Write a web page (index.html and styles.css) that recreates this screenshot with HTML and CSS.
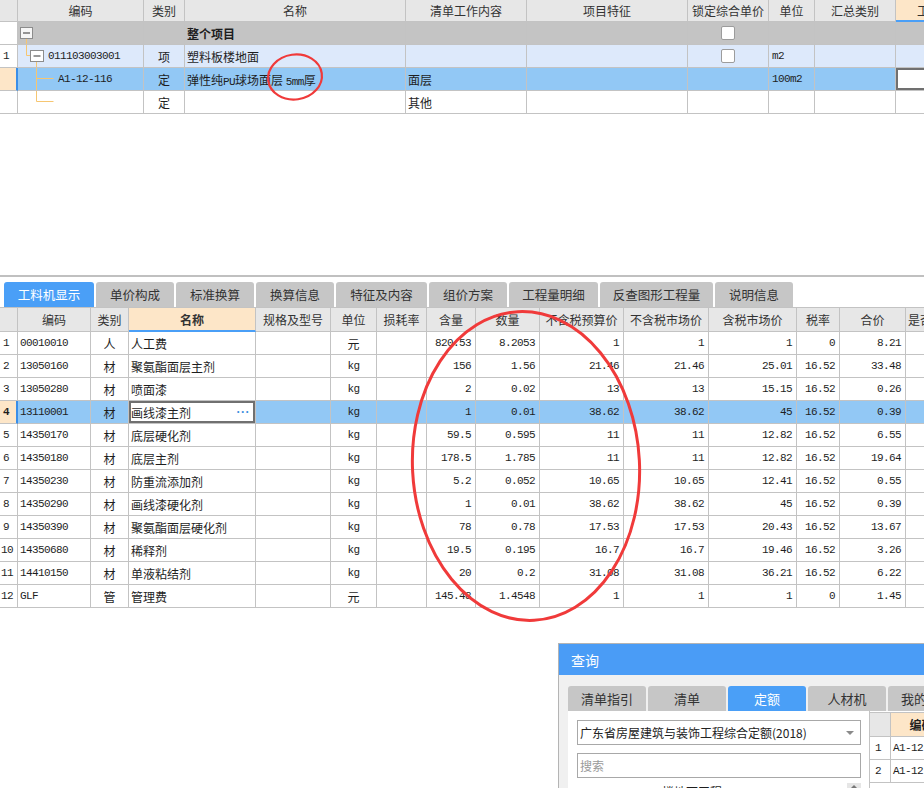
FILE: index.html
```html
<!DOCTYPE html>
<html lang="zh-CN">
<head>
<meta charset="utf-8">
<title>工料机显示</title>
<link rel="stylesheet" href="styles.css">
</head>
<body>
<div class="sheet">
  <!-- top table -->
  <div class="grid-wrap">
    <div class="row hd top-cols">
      <div class="c"></div><div class="c">编码</div><div class="c">类别</div><div class="c">名称</div><div class="c">清单工作内容</div><div class="c">项目特征</div><div class="c">锁定综合单价</div><div class="c">单位</div><div class="c">汇总类别</div><div class="c sorted left-hd">工程量表达式</div>
    </div>
    <div class="row top-cols r-gray">
      <div class="c rn white"></div>
      <div class="c tree"><svg width="30" height="22" viewBox="0 0 30 22"><line x1="8.5" y1="16.5" x2="8.5" y2="22" stroke="#f6c672"/><rect x="2.5" y="5.5" width="12" height="11" fill="#f6f6f6" stroke="#8c8c8c"/><line x1="5" y1="11" x2="12" y2="11" stroke="#333"/></svg></div>
      <div class="c"></div><div class="c bold">整个项目</div><div class="c"></div><div class="c"></div><div class="c ctr"><span class="chk"></span></div><div class="c"></div><div class="c"></div><div class="c"></div>
    </div>
    <div class="row top-cols r-light">
      <div class="c rn white mono">1</div>
      <div class="c tree"><svg width="30" height="22" viewBox="0 0 30 22"><polyline points="8.5,0 8.5,10.5 12.5,10.5" fill="none" stroke="#f6c672"/><line x1="18.5" y1="16.5" x2="18.5" y2="22" stroke="#f6c672"/><rect x="12.5" y="5.5" width="13" height="11" fill="#fff" stroke="#8c8c8c"/><line x1="15.5" y1="11" x2="22.5" y2="11" stroke="#333"/></svg><span class="mono">011103003001</span></div>
      <div class="c ctr">项</div><div class="c">塑料板楼地面</div><div class="c"></div><div class="c"></div><div class="c ctr"><span class="chk"></span></div><div class="c mono pl3">m2</div><div class="c"></div><div class="c"></div>
    </div>
    <div class="row top-cols r-sel">
      <div class="c rn cur"></div>
      <div class="c tree"><svg width="40" height="22" viewBox="0 0 40 22"><polyline points="18.5,0 18.5,22" fill="none" stroke="#f6c672"/><line x1="18.5" y1="10.5" x2="35.5" y2="10.5" stroke="#f6c672"/></svg><span class="mono">A1-12-116</span></div>
      <div class="c ctr">定</div><div class="c"><span class="mixed">弹性纯<span class="mono">PU</span>球场面层 <span class="mono">5mm</span>厚</span></div><div class="c">面层</div><div class="c"></div><div class="c"></div><div class="c mono pl3">100m2</div><div class="c"></div><div class="c edit"></div>
    </div>
    <div class="row top-cols">
      <div class="c rn"></div>
      <div class="c tree"><svg width="40" height="22" viewBox="0 0 40 22"><polyline points="18.5,0 18.5,10.5 35.5,10.5" fill="none" stroke="#f6c672"/></svg></div>
      <div class="c ctr">定</div><div class="c"></div><div class="c">其他</div><div class="c"></div><div class="c"></div><div class="c"></div><div class="c"></div><div class="c"></div>
    </div>
  </div>

  <div class="blank"></div>
  <div class="splitter"></div>

  <!-- tabs -->
  <div class="tabs">
    <div class="tab active w90">工料机显示</div>
    <div class="tab w78">单价构成</div>
    <div class="tab w78">标准换算</div>
    <div class="tab w78">换算信息</div>
    <div class="tab w91">特征及内容</div>
    <div class="tab w78">组价方案</div>
    <div class="tab w89">工程量明细</div>
    <div class="tab w113">反查图形工程量</div>
    <div class="tab w78">说明信息</div>
  </div>

  <!-- bottom table -->
  <div class="grid-wrap">
    <div class="row bhd bot-cols">
      <div class="c"></div><div class="c">编码</div><div class="c">类别</div><div class="c sorted bold">名称</div><div class="c">规格及型号</div><div class="c">单位</div><div class="c">损耗率</div><div class="c">含量</div><div class="c">数量</div><div class="c">不含税预算价</div><div class="c">不含税市场价</div><div class="c">含税市场价</div><div class="c">税率</div><div class="c">合价</div><div class="c left-hd2">是否暂估</div>
    </div>
    <div class="row bot-cols"><div class="c rn mono">1</div><div class="c mono">00010010</div><div class="c ctr">人</div><div class="c">人工费</div><div class="c"></div><div class="c ctr">元</div><div class="c"></div><div class="c r mono">820.53</div><div class="c r mono">8.2053</div><div class="c r mono">1</div><div class="c r mono">1</div><div class="c r mono">1</div><div class="c r mono">0</div><div class="c r mono">8.21</div><div class="c"></div></div>
    <div class="row bot-cols"><div class="c rn mono">2</div><div class="c mono">13050160</div><div class="c ctr">材</div><div class="c">聚氨酯面层主剂</div><div class="c"></div><div class="c ctr mono">kg</div><div class="c"></div><div class="c r mono">156</div><div class="c r mono">1.56</div><div class="c r mono">21.46</div><div class="c r mono">21.46</div><div class="c r mono">25.01</div><div class="c r mono">16.52</div><div class="c r mono">33.48</div><div class="c"></div></div>
    <div class="row bot-cols"><div class="c rn mono">3</div><div class="c mono">13050280</div><div class="c ctr">材</div><div class="c">喷面漆</div><div class="c"></div><div class="c ctr mono">kg</div><div class="c"></div><div class="c r mono">2</div><div class="c r mono">0.02</div><div class="c r mono">13</div><div class="c r mono">13</div><div class="c r mono">15.15</div><div class="c r mono">16.52</div><div class="c r mono">0.26</div><div class="c"></div></div>
    <div class="row bot-cols r-sel"><div class="c rn cur mono bold">4</div><div class="c mono">13110001</div><div class="c ctr">材</div><div class="c edit name-edit"><span>画线漆主剂</span><span class="dots">···</span></div><div class="c"></div><div class="c ctr mono">kg</div><div class="c"></div><div class="c r mono">1</div><div class="c r mono">0.01</div><div class="c r mono">38.62</div><div class="c r mono">38.62</div><div class="c r mono">45</div><div class="c r mono">16.52</div><div class="c r mono">0.39</div><div class="c"></div></div>
    <div class="row bot-cols"><div class="c rn mono">5</div><div class="c mono">14350170</div><div class="c ctr">材</div><div class="c">底层硬化剂</div><div class="c"></div><div class="c ctr mono">kg</div><div class="c"></div><div class="c r mono">59.5</div><div class="c r mono">0.595</div><div class="c r mono">11</div><div class="c r mono">11</div><div class="c r mono">12.82</div><div class="c r mono">16.52</div><div class="c r mono">6.55</div><div class="c"></div></div>
    <div class="row bot-cols"><div class="c rn mono">6</div><div class="c mono">14350180</div><div class="c ctr">材</div><div class="c">底层主剂</div><div class="c"></div><div class="c ctr mono">kg</div><div class="c"></div><div class="c r mono">178.5</div><div class="c r mono">1.785</div><div class="c r mono">11</div><div class="c r mono">11</div><div class="c r mono">12.82</div><div class="c r mono">16.52</div><div class="c r mono">19.64</div><div class="c"></div></div>
    <div class="row bot-cols"><div class="c rn mono">7</div><div class="c mono">14350230</div><div class="c ctr">材</div><div class="c">防重流添加剂</div><div class="c"></div><div class="c ctr mono">kg</div><div class="c"></div><div class="c r mono">5.2</div><div class="c r mono">0.052</div><div class="c r mono">10.65</div><div class="c r mono">10.65</div><div class="c r mono">12.41</div><div class="c r mono">16.52</div><div class="c r mono">0.55</div><div class="c"></div></div>
    <div class="row bot-cols"><div class="c rn mono">8</div><div class="c mono">14350290</div><div class="c ctr">材</div><div class="c">画线漆硬化剂</div><div class="c"></div><div class="c ctr mono">kg</div><div class="c"></div><div class="c r mono">1</div><div class="c r mono">0.01</div><div class="c r mono">38.62</div><div class="c r mono">38.62</div><div class="c r mono">45</div><div class="c r mono">16.52</div><div class="c r mono">0.39</div><div class="c"></div></div>
    <div class="row bot-cols"><div class="c rn mono">9</div><div class="c mono">14350390</div><div class="c ctr">材</div><div class="c">聚氨酯面层硬化剂</div><div class="c"></div><div class="c ctr mono">kg</div><div class="c"></div><div class="c r mono">78</div><div class="c r mono">0.78</div><div class="c r mono">17.53</div><div class="c r mono">17.53</div><div class="c r mono">20.43</div><div class="c r mono">16.52</div><div class="c r mono">13.67</div><div class="c"></div></div>
    <div class="row bot-cols"><div class="c rn rn2 mono">10</div><div class="c mono">14350680</div><div class="c ctr">材</div><div class="c">稀释剂</div><div class="c"></div><div class="c ctr mono">kg</div><div class="c"></div><div class="c r mono">19.5</div><div class="c r mono">0.195</div><div class="c r mono">16.7</div><div class="c r mono">16.7</div><div class="c r mono">19.46</div><div class="c r mono">16.52</div><div class="c r mono">3.26</div><div class="c"></div></div>
    <div class="row bot-cols"><div class="c rn rn2 mono">11</div><div class="c mono">14410150</div><div class="c ctr">材</div><div class="c">单液粘结剂</div><div class="c"></div><div class="c ctr mono">kg</div><div class="c"></div><div class="c r mono">20</div><div class="c r mono">0.2</div><div class="c r mono">31.08</div><div class="c r mono">31.08</div><div class="c r mono">36.21</div><div class="c r mono">16.52</div><div class="c r mono">6.22</div><div class="c"></div></div>
    <div class="row bot-cols"><div class="c rn rn2 mono">12</div><div class="c mono">GLF</div><div class="c ctr">管</div><div class="c">管理费</div><div class="c"></div><div class="c ctr">元</div><div class="c"></div><div class="c r mono">145.48</div><div class="c r mono">1.4548</div><div class="c r mono">1</div><div class="c r mono">1</div><div class="c r mono">1</div><div class="c r mono">0</div><div class="c r mono">1.45</div><div class="c"></div></div>
  </div>
</div>

<!-- floating query window -->
<div class="dialog">
  <div class="dlg-title">查询</div>
  <div class="dlg-tabs">
    <div class="dtab">清单指引</div>
    <div class="dtab">清单</div>
    <div class="dtab active">定额</div>
    <div class="dtab">人材机</div>
    <div class="dtab">我的数据</div>
  </div>
  <div class="dlg-body">
    <div class="dlg-left">
      <div class="select"><span>广东省房屋建筑与装饰工程综合定额(2018)</span><span class="caret"></span></div>
      <div class="search">搜索</div>
      <div class="peek"><span class="peek-text">楼地面工程</span><span class="scroll-up"></span></div>
    </div>
    <div class="dlg-right">
      <div class="drow dhd"><div class="dc"></div><div class="dc sorted bold">编码</div></div>
      <div class="drow"><div class="dc drn mono">1</div><div class="dc mono">A1-12-116</div></div>
      <div class="drow"><div class="dc drn mono">2</div><div class="dc mono">A1-12-117</div></div>
    </div>
  </div>
</div>

<!-- red hand-drawn annotations -->
<svg class="annot" width="924" height="788" viewBox="0 0 924 788">
  <ellipse cx="295" cy="77" rx="27" ry="22.5" fill="none" stroke="#f03a3a" stroke-width="2.2" transform="rotate(-8 295 77)"/>
  <ellipse cx="526" cy="466" rx="113.5" ry="154.5" fill="none" stroke="#f03a3a" stroke-width="3" transform="rotate(-3 526 466)"/>
</svg>
</body>
</html>
```

FILE: styles.css
```css
* { box-sizing: border-box; }
html, body { margin: 0; padding: 0; }
body {
  width: 924px;
  height: 788px;
  overflow: hidden;
  position: relative;
  background: #fff;
  font-family: "Noto Sans CJK SC", "Liberation Sans", sans-serif;
  font-size: 12px;
  color: #1e1e1e;
}
.mono {
  font-family: "Liberation Mono", "Noto Sans CJK SC", monospace;
  font-size: 11px;
  letter-spacing: -0.6px;
}
.mixed { white-space: pre; }
.bold { font-weight: bold; }

.grid-wrap { width: 924px; overflow: hidden; }
.row { display: grid; height: 23px; width: max-content; }
.top-cols { grid-template-columns: 18px 126px 41px 221px 121px 161px 81px 46px 81px 60px; }
.bot-cols { grid-template-columns: 18px 73px 38px 127px 75px 46px 50px 49px 64px 84px 85px 88px 43px 66px 40px; }

.c {
  border-right: 1px solid #c3c3c3;
  border-bottom: 1px solid #c3c3c3;
  display: flex;
  align-items: center;
  overflow: hidden;
  white-space: nowrap;
  padding: 0 2px;
}
.hd { height: 22px; background: #e7e7e7; }
.hd .c, .bhd .c { justify-content: center; color: #333; }
.bhd { height: 25px; background: #e7e7e7; border-top: 1px solid #c3c3c3; }
.sorted { background: #fde6c8; border-bottom: 2px solid #4a9ff7; }
.hd .left-hd { justify-content: flex-start; padding-left: 21px; }
.bhd .left-hd2 { justify-content: flex-start; padding-left: 2px; }

.ctr { justify-content: center; }
.r { justify-content: flex-end; padding-right: 4px; }
.pl3 { padding-left: 3px; }
.rn { padding-left: 3px; background: #fff; }
.rn2 { padding-left: 1px; }
.tree { padding: 0; }
.tree svg { flex-shrink: 0; display: block; }

.r-gray { background: #c4c4c4; }
.r-light { background: #dde9fb; }
.r-sel { background: #92c8f5; }
.rn.cur { background: #fde6c8; border-right: 2px solid #3a8ee8; }
.edit { background: #fff; box-shadow: inset 0 0 0 2px #707070; }
.name-edit { justify-content: space-between; padding-right: 5px; }
.dots {
  color: #3d8fe0;
  font-family: "Liberation Sans", sans-serif;
  font-weight: bold;
  font-size: 12px;
  letter-spacing: 0.5px;
}

.chk {
  width: 14px;
  height: 14px;
  border: 1px solid #9c9c9c;
  border-radius: 2px;
  background: #fff;
}

.blank { height: 161px; }
.splitter { height: 2px; background: #c0c0c0; }

.tabs {
  display: flex;
  gap: 2px;
  padding: 5px 0 0 4px;
  height: 30px;
}
.tab {
  height: 25px;
  background: #c6c6c6;
  color: #333;
  border-radius: 3px 3px 0 0;
  display: flex;
  align-items: center;
  justify-content: center;
  font-size: 12.5px;
}
.tab.active { background: #4a9ff7; color: #fff; }
.w78 { width: 78px; }
.w89 { width: 89px; }
.w90 { width: 90px; }
.w91 { width: 91px; }
.w113 { width: 113px; }

/* query dialog */
.dialog {
  position: absolute;
  left: 558px;
  top: 643px;
  width: 380px;
  height: 160px;
  background: #f0f0f0;
  border: 1px solid #b4b4b4;
  overflow: hidden;
}
.dlg-title {
  height: 31px;
  background: #4a9cf6;
  color: #fff;
  font-size: 14px;
  padding-left: 12px;
  display: flex;
  align-items: center;
}
.dlg-tabs {
  display: flex;
  gap: 2px;
  margin-top: 11px;
  padding-left: 9px;
}
.dtab {
  width: 78px;
  height: 25px;
  flex-shrink: 0;
  background: #c6c6c6;
  color: #333;
  border-radius: 3px 3px 0 0;
  display: flex;
  align-items: center;
  justify-content: center;
  font-size: 13px;
}
.dtab.active { background: #4a9ff7; color: #fff; }
.dlg-body { display: flex; margin-left: 9px; height: 100px; }
.dlg-left {
  width: 301px;
  flex-shrink: 0;
  background: #fff;
  padding: 9px 0 0 9px;
}
.select, .search {
  width: 284px;
  height: 25px;
  border: 1px solid #a8a8a8;
  background: #fff;
  display: flex;
  align-items: center;
  padding-left: 2px;
}
.select { justify-content: space-between; padding-right: 6px; color: #222; }
.caret {
  width: 0;
  height: 0;
  border-left: 4px solid transparent;
  border-right: 4px solid transparent;
  border-top: 4px solid #8a8a8a;
}
.search { margin-top: 8px; color: #9a9a9a; }
.peek {
  margin-top: 5px;
  width: 284px;
  height: 16px;
  display: flex;
  align-items: flex-start;
  justify-content: space-between;
}
.peek-text { margin-left: 85px; margin-top: 2px; line-height: 14px; }
.scroll-up {
  width: 14px;
  height: 12px;
  background: #e6e6e6;
  position: relative;
}
.scroll-up::after {
  content: "";
  position: absolute;
  left: 3px;
  top: 2px;
  border-left: 4px solid transparent;
  border-right: 4px solid transparent;
  border-bottom: 4px solid #777;
}
.dlg-right {
  flex: 1;
  background: #fff;
  border-left: 1px solid #c3c3c3;
  padding-top: 1px;
}
.drow { display: grid; grid-template-columns: 21px 62px; height: 23px; }
.dhd { height: 25px; border-top: 1px solid #c3c3c3; background: #e7e7e7; }
.dc {
  border-right: 1px solid #c3c3c3;
  border-bottom: 1px solid #c3c3c3;
  display: flex;
  align-items: center;
  white-space: nowrap;
  overflow: hidden;
  padding-left: 2px;
}
.dhd .dc { justify-content: center; padding-left: 0; }
.drn { padding-left: 5px; }

.annot {
  position: absolute;
  left: 0;
  top: 0;
  pointer-events: none;
}
```
